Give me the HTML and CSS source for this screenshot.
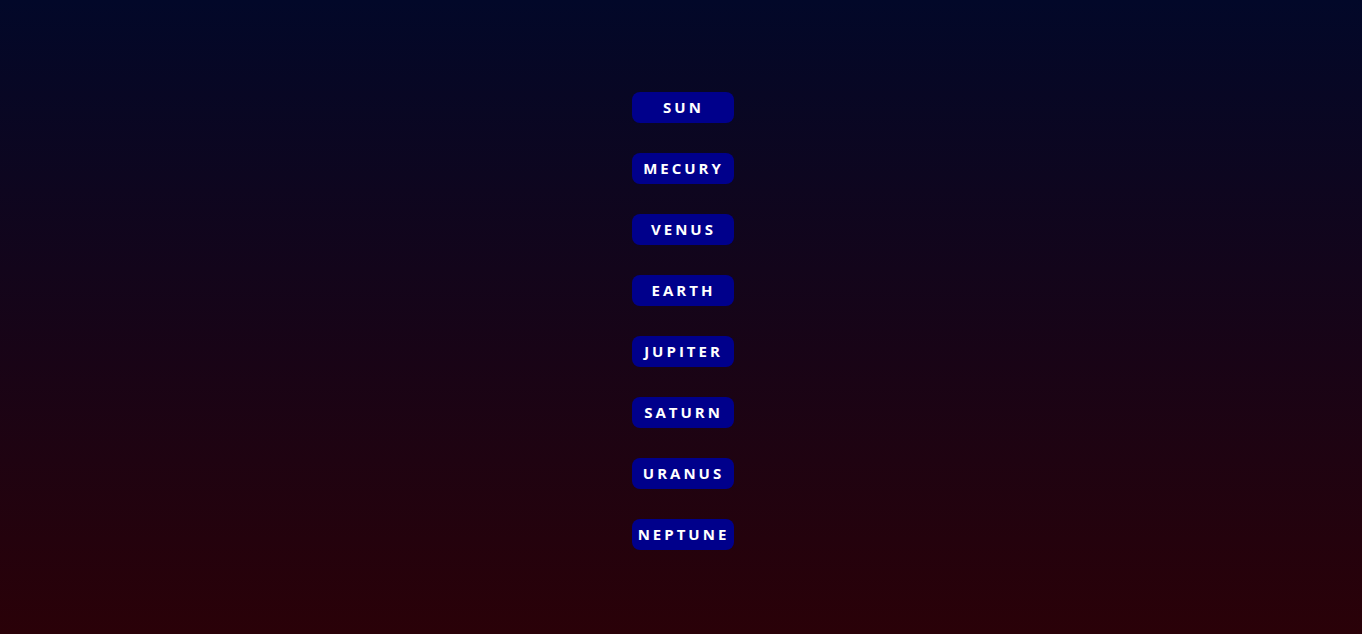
FILE: index.html
```html
<!DOCTYPE html>
<html lang="en">
<head>
<meta charset="utf-8">
<title>Planets</title>
<link rel="stylesheet" href="styles.css">
</head>
<body>
<nav class="menu">
  <a class="planet" href="#">SUN</a>
  <a class="planet" href="#">MECURY</a>
  <a class="planet" href="#">VENUS</a>
  <a class="planet" href="#">EARTH</a>
  <a class="planet" href="#">JUPITER</a>
  <a class="planet" href="#">SATURN</a>
  <a class="planet" href="#">URANUS</a>
  <a class="planet" href="#">NEPTUNE</a>
</nav>
</body>
</html>
```
FILE: styles.css
```css
html, body {
  margin: 0;
  height: 100%;
}
body {
  background: linear-gradient(to bottom, #020829, #2a0108);
  font-family: "Open Sans", "Liberation Sans", sans-serif;
}
.menu {
  display: flex;
  flex-direction: column;
  align-items: center;
  gap: 30.5px;
  padding-top: 92px;
  padding-left: 4px;
}
.planet {
  box-sizing: border-box;
  width: 102px;
  height: 30.5px;
  display: flex;
  align-items: center;
  justify-content: center;
  background: #00008b;
  border-radius: 8px;
  color: #fff;
  text-decoration: none;
  font-weight: 700;
  font-size: 15px;
  letter-spacing: 3px;
  padding-left: 1px;
}
```
